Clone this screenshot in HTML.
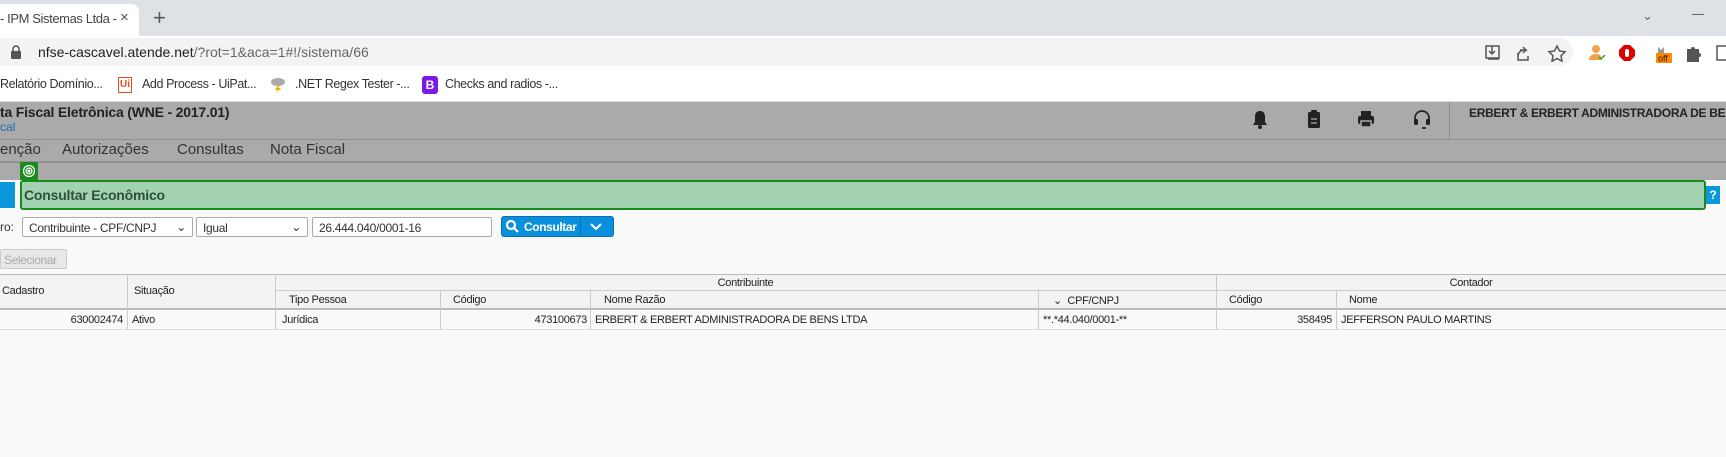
<!DOCTYPE html>
<html><head><meta charset="utf-8"><style>
*{box-sizing:border-box;margin:0;padding:0}
body{width:1726px;height:457px;overflow:hidden;background:#f9f9f9;font-family:"Liberation Sans",sans-serif;position:relative;color:#333}
.a{position:absolute;white-space:nowrap}
.tabbar{left:0;top:0;width:1726px;height:36px;background:#dee1e6}
.tab{left:0;top:4px;width:139px;height:32px;background:#fff;border-radius:0 8px 0 0}
.addr{left:0;top:36px;width:1726px;height:32px;background:#fff}
.omni{left:-20px;top:38px;width:1593px;height:28px;background:#f1f3f4;border-radius:14px}
.bm{left:0;top:68px;width:1726px;height:34px;background:#fff;border-bottom:1px solid #ddd}
.bmt{font-size:12.5px;color:#333;top:77px;letter-spacing:-0.4px}
.hdr{left:0;top:102px;width:1726px;height:60px;background:#aaa}
.menu{font-size:15px;color:#333;top:141px}
.th{font-size:11.5px;color:#333;letter-spacing:-0.2px}
.cell{position:absolute;font-size:11px;color:#222;white-space:nowrap;letter-spacing:-0.3px}
.vl{position:absolute;width:1px;background:#ccc}
.sel{position:absolute;top:217px;height:20px;border:1px solid #aaa;background:#fff;font-size:12px;padding:3px 6px;border-radius:2px;letter-spacing:-0.3px}
</style></head><body>
<div class="a tabbar"></div>
<div class="a tab"></div>
<div class="a" style="left:0;top:11px;font-size:13px;color:#444;letter-spacing:-0.4px">- IPM Sistemas Ltda -</div>
<div class="a" style="left:120px;top:9px;font-size:15px;color:#555">×</div>
<div class="a" style="left:153px;top:5px;font-size:22px;color:#555">+</div>
<div class="a" style="left:1642px;top:8px;font-size:13px;color:#666">⌄</div>
<div class="a" style="left:1692px;top:14px;width:12px;height:1px;background:#666"></div>
<div class="a addr"></div>
<div class="a omni"></div>
<svg class="a" style="left:10px;top:45px" width="12" height="14"><rect x="1" y="6" width="10" height="8" rx="1" fill="#555"/><path d="M3 6V4a3 3 0 0 1 6 0v2" stroke="#555" stroke-width="1.6" fill="none"/></svg>
<div class="a" style="left:38px;top:44px;font-size:14px;color:#202124">nfse-cascavel.atende.net<span style="color:#666">/?rot=1&amp;aca=1#!/sistema/66</span></div>
<svg class="a" style="left:1485px;top:44px" width="100" height="18" fill="none" stroke="#555" stroke-width="1.5"><rect x="1" y="2" width="13" height="12"/><path d="M7 2v8M4 7l3 3 3-3M3 15h11"/><path d="M35 6h6l-3-3M41 6l-3 3M40 6c-5 0-7 3-7 7M33 9v7h10v-4"/><path d="M72 2l2.5 5 5.5.8-4 3.9 1 5.5-5-2.6-5 2.6 1-5.5-4-3.9 5.5-.8z"/></svg>
<svg class="a" style="left:1588px;top:43px" width="140" height="22"><circle cx="8" cy="6" r="4" fill="#f5a04a"/><path d="M1 17c0-5 4-6 7-6 3 0 5 1 5 3v3z" fill="#f5a04a"/><path d="M11 14l2 2 4-4" stroke="#2a2" stroke-width="1.5" fill="none"/><path d="M36 2h6l5 5v6l-5 5h-6l-5-5V7z" fill="#d00"/><rect x="37" y="6" width="4" height="8" rx="2" fill="#fff"/><path d="M70 4l3 3 3-3v8h-6z" fill="#999"/><rect x="68" y="10" width="16" height="10" rx="1" fill="#f80"/><text x="70" y="18.5" font-size="9" font-family="Liberation Sans" fill="#222">off</text><path d="M99 6h4a2 2 0 0 1 4 0h4v4a2 2 0 0 1 0 4v5h-12z" fill="#555"/><rect x="129" y="3" width="10" height="14" fill="none" stroke="#555" stroke-width="1.5"/></svg>
<div class="a bm"></div>
<div class="a bmt" style="left:0">Relatório Domínio...</div>
<div class="a" style="left:118px;top:77px;width:14px;height:16px;border:1.5px solid #e8491d;color:#e8491d;font-size:10px;font-weight:bold;text-align:center;line-height:13px">Ui</div>
<div class="a bmt" style="left:142px">Add Process - UiPat...</div>
<svg class="a" style="left:270px;top:76px" width="16" height="18"><ellipse cx="8" cy="6" rx="7" ry="4" fill="#aaa"/><path d="M8 9l-3 5h3l-2 4 5-6H8l2-3z" fill="#f3b000"/></svg>
<div class="a bmt" style="left:295px">.NET Regex Tester -...</div>
<div class="a" style="left:422px;top:76px;width:16px;height:18px;background:#7a19e8;border-radius:3px;color:#fff;font-size:12px;font-weight:bold;text-align:center;line-height:18px">B</div>
<div class="a bmt" style="left:445px">Checks and radios -...</div>
<div class="a hdr"></div>
<div class="a" style="left:0;top:139px;width:1726px;height:1px;background:#8f8f8f"></div>
<div class="a" style="left:0;top:161px;width:1726px;height:2px;background:#909090"></div>
<div class="a" style="left:0;top:104px;font-size:14px;font-weight:bold;color:#222;letter-spacing:-0.2px">ta Fiscal Eletrônica (WNE - 2017.01)</div>
<div class="a" style="left:0;top:120px;font-size:12px;color:#1a6fb5">cal</div>
<svg class="a" style="left:1250px;top:108px" width="190" height="24" fill="#222"><path d="M10 3c-4 0-5 3-5 6v5l-2 3h14l-2-3V9c0-3-1-6-5-6z"/><circle cx="10" cy="19" r="2"/><rect x="58" y="4" width="12" height="16" rx="1.5"/><rect x="61" y="2" width="6" height="4" rx="1" fill="#222"/><path d="M61 11h6M61 15h6" stroke="#aaa" stroke-width="1.2"/><rect x="111" y="3" width="10" height="5"/><rect x="108" y="8" width="16" height="8" rx="2"/><rect x="111" y="13" width="10" height="6" fill="#222" stroke="#aaa" stroke-width="1.5"/><path d="M165 14v-4a7 7 0 0 1 14 0v4M172 20h4" stroke="#222" stroke-width="1.7" fill="none"/><rect x="164" y="11" width="4" height="6" rx="1.5"/><rect x="176" y="11" width="4" height="6" rx="1.5"/></svg>
<div class="a" style="left:1449px;top:102px;width:1px;height:37px;background:#8f8f8f"></div>
<div class="a" style="left:1469px;top:106px;font-size:12px;font-weight:bold;color:#222;letter-spacing:-0.3px">ERBERT &amp; ERBERT ADMINISTRADORA DE BENS</div>
<div class="a menu" style="left:0">enção</div>
<div class="a menu" style="left:62px">Autorizações</div>
<div class="a menu" style="left:177px">Consultas</div>
<div class="a menu" style="left:270px">Nota Fiscal</div>
<div class="a" style="left:0;top:163px;width:1726px;height:17px;background:#aaa"></div>
<div class="a" style="left:20px;top:162px;width:18px;height:18px;background:#1a8a1a;border-radius:2px 2px 0 0"></div>
<svg class="a" style="left:22px;top:164px" width="14" height="14" fill="none" stroke="#fff" stroke-width="1.2"><circle cx="7" cy="7" r="5.5"/><circle cx="7" cy="7" r="3"/><circle cx="7" cy="7" r="1" fill="#fff"/></svg>
<div class="a" style="left:0;top:182px;width:15px;height:26px;background:#0a97dc"></div>
<div class="a" style="left:20px;top:180px;width:1686px;height:30px;background:#a2d2b2;border:2px solid #1a8a1a;border-radius:3px"></div>
<div class="a" style="left:24px;top:187px;font-size:14px;font-weight:bold;color:#2f4f3a;letter-spacing:-0.2px">Consultar Econômico</div>
<div class="a" style="left:1706px;top:186px;width:14px;height:18px;background:#0a97dc;color:#fff;font-size:12px;font-weight:bold;text-align:center;line-height:18px">?</div>
<div class="a" style="left:0;top:220px;font-size:12px">ro:</div>
<div class="sel" style="left:22px;width:171px">Contribuinte - CPF/CNPJ<span style="position:absolute;right:6px;top:2px">⌄</span></div>
<div class="sel" style="left:196px;width:112px">Igual<span style="position:absolute;right:6px;top:2px">⌄</span></div>
<div class="sel" style="left:312px;width:180px">26.444.040/0001-16</div>
<div class="a" style="left:501px;top:216px;width:113px;height:21px;background:#0a8fdc;border:1px solid #0770b0;border-radius:3px"></div>
<div class="a" style="left:580px;top:216px;width:1px;height:21px;background:#0770b0"></div>
<svg class="a" style="left:505px;top:219px" width="14" height="14" fill="none" stroke="#fff" stroke-width="2.2"><circle cx="6" cy="6" r="4"/><path d="M9 9l4 4"/></svg>
<div class="a" style="left:524px;top:220px;font-size:12px;font-weight:bold;color:#fff;letter-spacing:-0.4px">Consultar</div>
<svg class="a" style="left:589px;top:222px" width="14" height="10" fill="none" stroke="#fff" stroke-width="2"><path d="M2 2l5 5 5-5"/></svg>
<div class="a" style="left:0;top:249px;width:67px;height:20px;background:#e8e8e8;border:1px solid #ccc;border-radius:2px;font-size:12px;color:#aaa;padding:3px 3px;letter-spacing:-0.4px">Selecionar</div>
<div class="a" style="left:0;top:274px;width:1726px;height:35px;background:#f3f3f3"></div>
<div class="a" style="left:0;top:274px;width:1726px;height:1px;background:#bbb"></div>
<div class="a" style="left:275px;top:290px;width:1451px;height:1px;background:#ccc"></div>
<div class="a" style="left:0;top:308px;width:1726px;height:2px;background:#bbb"></div>
<div class="a" style="left:0;top:329px;width:1726px;height:1px;background:#ddd"></div>
<div class="vl" style="left:127px;top:274px;height:56px"></div>
<div class="vl" style="left:275px;top:274px;height:56px"></div>
<div class="vl" style="left:440px;top:290px;height:40px"></div>
<div class="vl" style="left:590px;top:290px;height:40px"></div>
<div class="vl" style="left:1038px;top:290px;height:40px"></div>
<div class="vl" style="left:1216px;top:274px;height:56px"></div>
<div class="vl" style="left:1336px;top:290px;height:40px"></div>
<div class="cell th" style="left:2px;top:285px">Cadastro</div>
<div class="cell th" style="left:134px;top:285px">Situação</div>
<div class="cell th" style="left:275px;width:941px;text-align:center;top:277px">Contribuinte</div>
<div class="cell th" style="left:1216px;width:510px;text-align:center;top:277px">Contador</div>
<div class="cell th" style="left:289px;top:294px">Tipo Pessoa</div>
<div class="cell th" style="left:453px;top:294px">Código</div>
<div class="cell th" style="left:604px;top:294px">Nome Razão</div>
<div class="cell th" style="left:1053px;top:294px">⌄&nbsp; CPF/CNPJ</div>
<div class="cell th" style="left:1229px;top:294px">Código</div>
<div class="cell th" style="left:1349px;top:294px">Nome</div>
<div class="cell" style="left:0;width:123px;text-align:right;top:314px">630002474</div>
<div class="cell" style="left:132px;top:314px">Ativo</div>
<div class="cell" style="left:282px;top:314px">Jurídica</div>
<div class="cell" style="left:440px;width:147px;text-align:right;top:314px">473100673</div>
<div class="cell" style="left:595px;top:314px">ERBERT &amp; ERBERT ADMINISTRADORA DE BENS LTDA</div>
<div class="cell" style="left:1043px;top:314px">**.*44.040/0001-**</div>
<div class="cell" style="left:1216px;width:116px;text-align:right;top:314px">358495</div>
<div class="cell" style="left:1341px;top:314px">JEFFERSON PAULO MARTINS</div>
</body></html>
